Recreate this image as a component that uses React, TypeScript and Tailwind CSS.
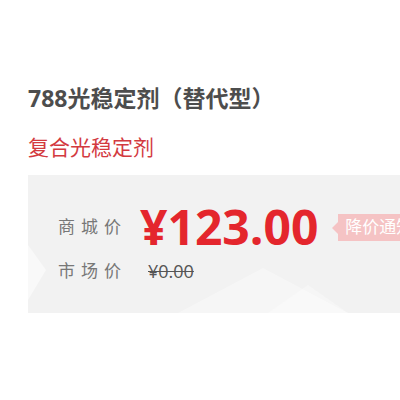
import React from 'react';

const font = { fontFamily: '"Open Sans", "Noto Sans CJK SC", sans-serif' };

export default function App() {
  return (
    <div className="w-[400px] h-[400px] bg-white overflow-hidden pl-[28px] pt-[84px]" style={font}>
      {/* Title */}
      <h1 className="text-[23px] leading-[28px] font-bold text-[#4d4d4d] whitespace-nowrap">
        788光稳定剂（替代型）
      </h1>
      <p className="mt-[21px] text-[21px] leading-[28px] text-[#d33a3f] whitespace-nowrap">复合光稳定剂</p>

      {/* Price panel */}
      <div className="relative mt-[14px] h-[138px] bg-[#f2f2f2] pt-[27px] pl-[30px] overflow-hidden">
        <svg className="absolute inset-0" width="372" height="138" viewBox="0 0 372 138">
          <polygon points="0,70 18,95 0,125" fill="#ffffff" opacity="0.55" />
          <polygon points="235,93 150,138 320,138" fill="#ffffff" opacity="0.35" />
          <polygon points="280,110 240,138 320,138" fill="#ffffff" opacity="0.3" />
        </svg>

        <div className="relative flex items-center h-[50px]">
          <span className="shrink-0 w-[82px] text-[17px] tracking-[6px] text-[#777777] whitespace-nowrap">商城价</span>
          <span className="shrink-0 text-[48px] leading-[50px] font-bold text-[#e4262d] whitespace-nowrap">¥123.00</span>
          <div className="relative shrink-0 ml-[20px] flex items-center h-[27px] bg-[#f5c3c4] pl-[7px] pr-[8px]">
            <span className="absolute left-[-6px] top-[8px] w-0 h-0 border-y-[6px] border-y-transparent border-r-[6px] border-r-[#f5c3c4]" />
            <span className="text-[17px] text-white whitespace-nowrap">降价通知</span>
          </div>
        </div>

        <div className="relative flex items-center h-[24px] mt-[7px]">
          <span className="shrink-0 w-[90px] text-[17px] tracking-[6px] text-[#777777] whitespace-nowrap">市场价</span>
          <span className="shrink-0 text-[18px] text-[#555555] line-through">¥0.00</span>
        </div>
      </div>
    </div>
  );
}
